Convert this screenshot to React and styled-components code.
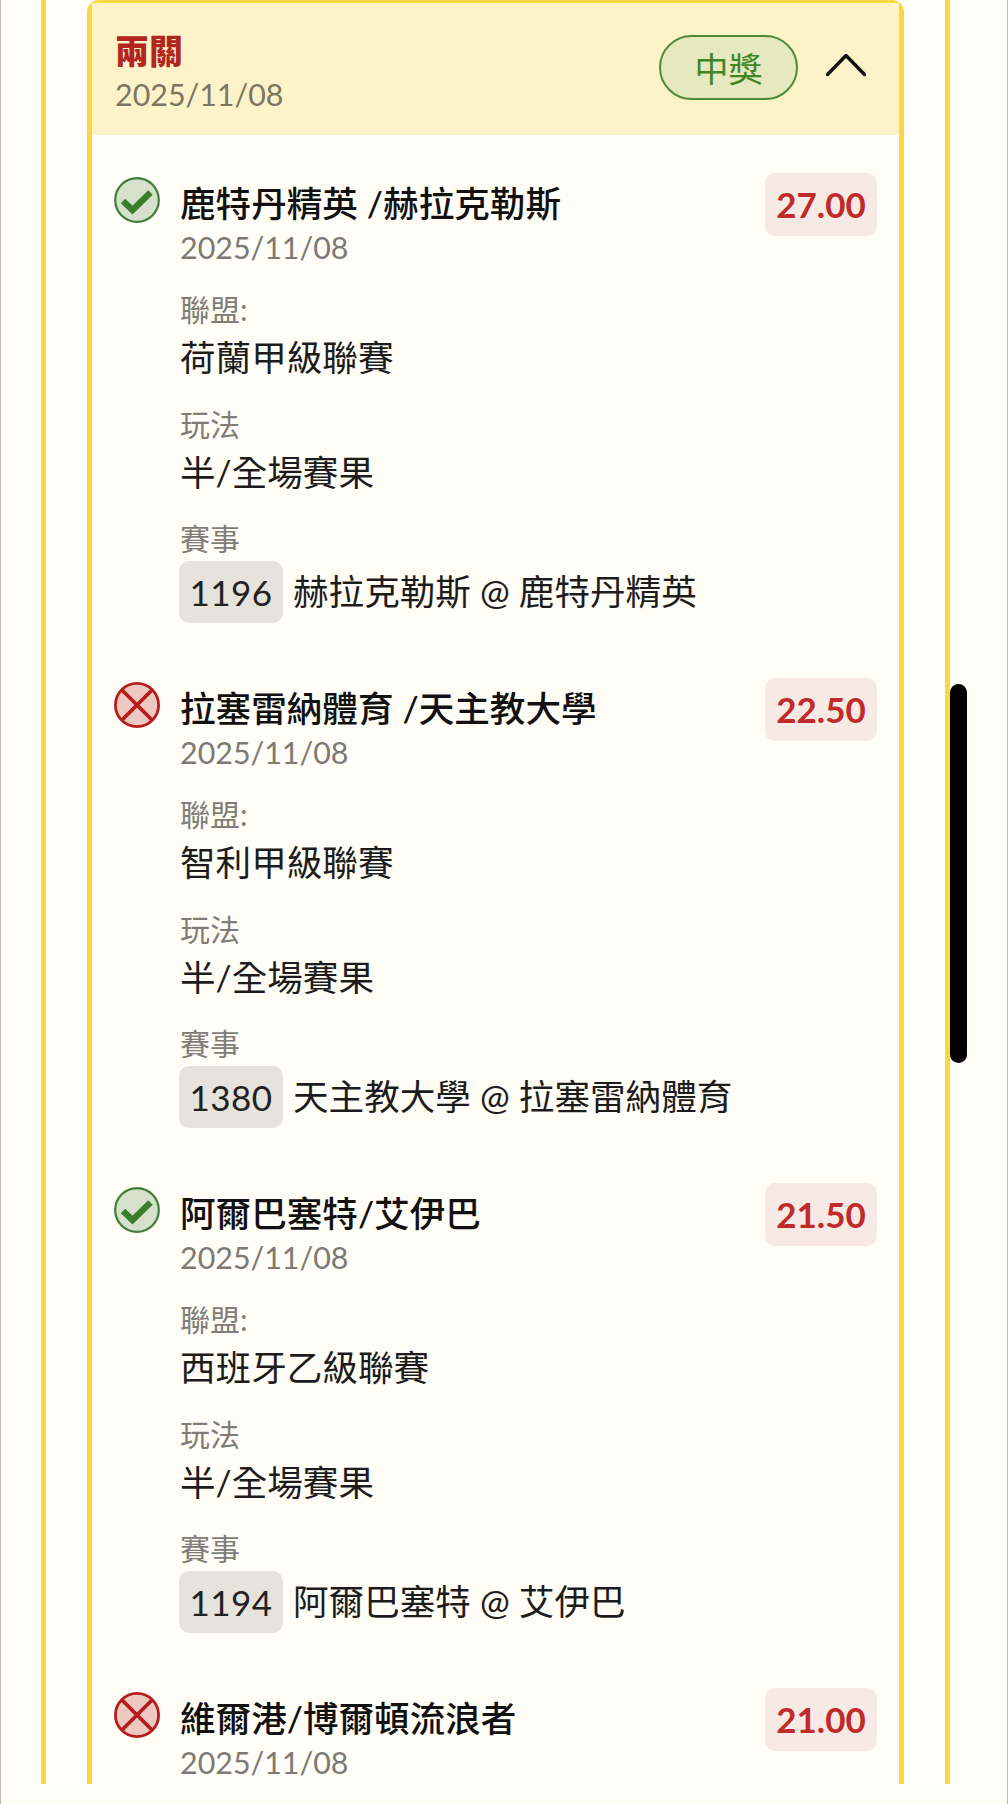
import React from 'react';
import styled, { createGlobalStyle } from 'styled-components';

const GlobalStyle = createGlobalStyle`
  html, body {
    margin: 0;
    padding: 0;
    background: #fffdf5;
  }
  * {
    box-sizing: border-box;
  }
`;

const Page = styled.div`
  position: relative;
  height: 1804px;
  padding: 0 57px 20px 40px;
  overflow: hidden;
  background: #fffdf5;
  border-left: 1px solid #b9b7b0;
  border-right: 1px solid #b9b7b0;
  font-family: Lato, "Noto Sans CJK TC", sans-serif;
`;

const Panel = styled.div`
  height: 100%;
  padding: 0 41px;
  overflow: hidden;
  background: #fffffb;
  border-left: 5px solid #fbd83f;
  border-right: 5px solid #fbd83f;
`;

const Card = styled.div`
  min-height: 100%;
  background: #fffdf5;
  border: 5px solid #fbd83f;
  border-top-width: 3px;
  border-bottom: 0;
  border-radius: 12px 12px 0 0;
`;

const Header = styled.header`
  display: flex;
  align-items: flex-start;
  height: 132px;
  padding: 28px 33px 0 23px;
  background: #fdf3c9;
`;

const HeaderText = styled.div`
  flex: 1;
`;

const Heading = styled.h2`
  margin: 0;
  height: 42px;
  font-size: 34px;
  line-height: 40px;
  font-weight: 900;
  color: #b3261e;
`;

const HeaderDate = styled.div`
  font-size: 30.4px;
  line-height: 42px;
  color: #7d7660;
`;

const StatusPill = styled.div`
  display: flex;
  align-items: center;
  justify-content: center;
  width: 139px;
  height: 65px;
  margin-top: 4px;
  border: 2px solid #4f8a3c;
  border-radius: 33px;
  background: #e5e9bd;
  color: #3f8526;
  font-size: 34px;
`;

const Chevron = styled.svg`
  width: 40px;
  height: 24px;
  margin: 22px 0 0 28px;
  fill: none;
  stroke: #111;
  stroke-width: 3.4;
  stroke-linecap: round;
  stroke-linejoin: round;
`;

const List = styled.div`
  display: flex;
  flex-direction: column;
  gap: 55px;
  padding: 38px 22px 0 22px;
`;

const Row = styled.article`
  display: flex;
  align-items: flex-start;
`;

const StatusIcon = styled.svg`
  flex: none;
  width: 46px;
  height: 46px;
  margin: 4px 20px 0 0;
`;

const Body = styled.div`
  flex: 1;
  padding-top: 9px;
`;

const MatchTitle = styled.h3`
  margin: 0;
  font-size: 35.6px;
  line-height: 44px;
  font-weight: 500;
  color: #111;
`;

const MatchDate = styled.div`
  font-size: 30.4px;
  line-height: 42px;
  color: #7b7a75;
`;

const Field = styled.div`
  margin-top: ${(p) => p.$gap}px;
`;

const Label = styled.div`
  padding-bottom: 4px;
  font-size: 30px;
  line-height: 38px;
  color: #7f7d77;
`;

const Value = styled.div`
  display: flex;
  align-items: center;
  min-height: 52px;
  font-size: 35.6px;
  line-height: 52px;
  color: #1c1c1c;
`;

const EventNo = styled.span`
  flex: none;
  width: 104px;
  height: 62px;
  margin: 0 10px 0 -1px;
  border-radius: 10px;
  background: #e6e3dd;
  font-size: 35px;
  line-height: 62px;
  text-align: center;
  letter-spacing: 0.5px;
  color: #222;
`;

const Odds = styled.div`
  flex: none;
  width: 112px;
  height: 63px;
  border-radius: 10px;
  background: #f7e9e4;
  color: #bf2a2a;
  font-size: 35px;
  font-weight: 700;
  line-height: 63px;
  text-align: center;
`;

const Scrollbar = styled.div`
  position: absolute;
  top: 684px;
  left: 949px;
  width: 17px;
  height: 379px;
  border-radius: 9px;
  background: #000;
`;

const Check = () => (
  <StatusIcon viewBox="0 0 46 46">
    <circle cx="23" cy="23" r="21.8" fill="#d6e1cc" stroke="#3f7d3a" strokeWidth="2.2" />
    <path d="M9 24l9.5 9L36.5 15.5" fill="none" stroke="#3a7d2a" strokeWidth="6.4" />
  </StatusIcon>
);

const Cross = () => (
  <StatusIcon viewBox="0 0 46 46">
    <circle cx="23" cy="23" r="21.6" fill="#eec9c2" stroke="#b71c1c" strokeWidth="2.8" />
    <path d="M8.5 8.5l29 29M37.5 8.5l-29 29" fill="none" stroke="#b71c1c" strokeWidth="3.8" />
  </StatusIcon>
);

const legs = [
  { won: true, title: '鹿特丹精英 /赫拉克勒斯', odds: '27.00', league: '荷蘭甲級聯賽', no: '1196', match: '赫拉克勒斯 @ 鹿特丹精英' },
  { won: false, title: '拉塞雷納體育 /天主教大學', odds: '22.50', league: '智利甲級聯賽', no: '1380', match: '天主教大學 @ 拉塞雷納體育' },
  { won: true, title: '阿爾巴塞特/艾伊巴', odds: '21.50', league: '西班牙乙級聯賽', no: '1194', match: '阿爾巴塞特 @ 艾伊巴' },
  { won: false, title: '維爾港/博爾頓流浪者', odds: '21.00' },
];

export default function App() {
  return (
    <Page>
      <GlobalStyle />
      <Panel>
        <Card>
          <Header>
            <HeaderText>
              <Heading>兩關</Heading>
              <HeaderDate>2025/11/08</HeaderDate>
            </HeaderText>
            <StatusPill>中獎</StatusPill>
            <Chevron viewBox="0 0 40 24">
              <path d="M1.5 21.5L20 2.5l18.5 19" />
            </Chevron>
          </Header>
          <List>
            {legs.map((leg) => (
              <Row key={leg.title}>
                {leg.won ? <Check /> : <Cross />}
                <Body>
                  <MatchTitle>{leg.title}</MatchTitle>
                  <MatchDate>2025/11/08</MatchDate>
                  {leg.league && (
                    <>
                      <Field $gap={22}>
                        <Label>聯盟:</Label>
                        <Value>{leg.league}</Value>
                      </Field>
                      <Field $gap={21}>
                        <Label>玩法</Label>
                        <Value>半/全場賽果</Value>
                      </Field>
                      <Field $gap={20}>
                        <Label>賽事</Label>
                        <Value>
                          <EventNo>{leg.no}</EventNo>
                          {leg.match}
                        </Value>
                      </Field>
                    </>
                  )}
                </Body>
                <Odds>{leg.odds}</Odds>
              </Row>
            ))}
          </List>
        </Card>
      </Panel>
      <Scrollbar />
    </Page>
  );
}
